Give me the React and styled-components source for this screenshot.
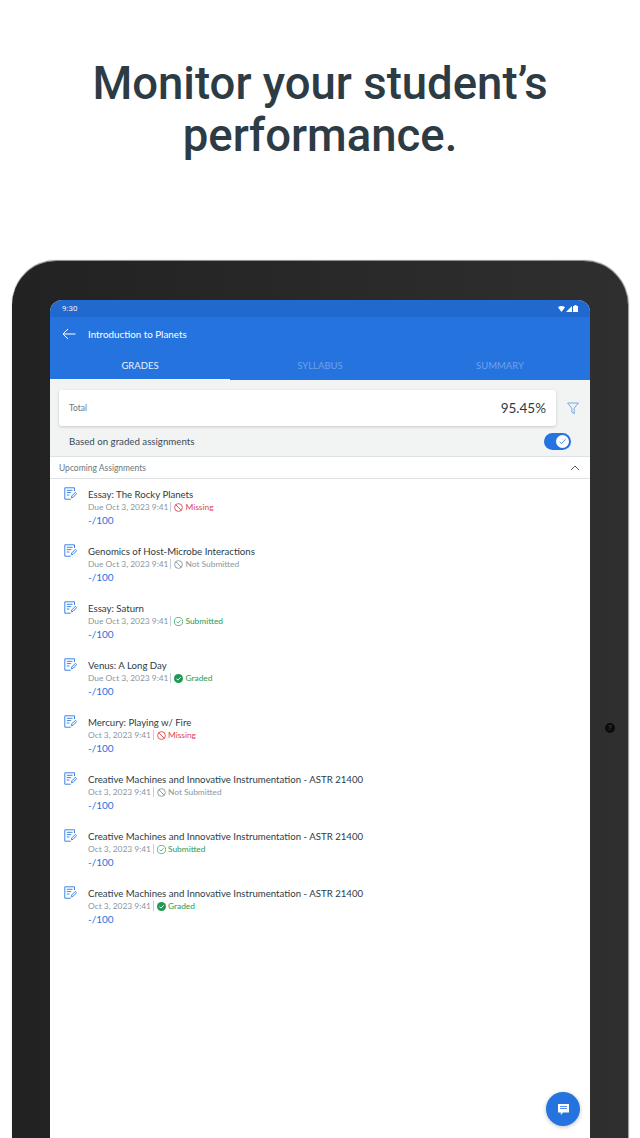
import React from "react";
import styled, { createGlobalStyle } from "styled-components";

const GlobalStyle = createGlobalStyle`
  html, body {
    margin: 0;
    padding: 0;
    background: #fff;
    height: 1138px;
    overflow: hidden;
  }
  * { box-sizing: border-box; }
`;

const Page = styled.div`
  width: 640px;
  height: 1138px;
  overflow: hidden;
  background: #fff;
`;

const Headline = styled.h1`
  margin: 0;
  padding-top: 58px;
  height: 261px;
  text-align: center;
  font-family: Roboto, sans-serif;
  font-weight: 500;
  font-size: 45.5px;
  line-height: 52px;
  color: #2d3b45;
`;

const Tablet = styled.div`
  position: relative;
  width: 616px;
  height: 900px;
  margin-left: 12px;
  padding: 39px 38px 0 38px;
  border-radius: 44px 44px 0 0;
  background: linear-gradient(90deg, #222 0%, #2f2f2f 100%);
  box-shadow: 1px 0 1px #999, 0 -1px 1px #888;
`;

const Camera = styled.div`
  position: absolute;
  left: 593px;
  top: 462px;
  width: 10px;
  height: 10px;
  border-radius: 50%;
  background: #0c0c0c;
  color: #3a3a3a;
  font: 700 7px/10px "Liberation Sans", sans-serif;
  text-align: center;
`;

const Screen = styled.div`
  position: relative;
  height: 861px;
  border-radius: 12px 12px 0 0;
  overflow: hidden;
  background: #fff;
  font-family: Lato, sans-serif;
`;

const StatusBar = styled.div`
  height: 17px;
  padding: 0 12px;
  display: flex;
  align-items: center;
  justify-content: space-between;
  background: #2269cf;
  color: #e6eefb;
  font: 400 8px Roboto, sans-serif;
`;

const StatusIcons = styled.div`
  display: flex;
  align-items: center;
  gap: 1px;
`;

const AppBar = styled.div`
  background: #2573df;
`;

const TitleRow = styled.div`
  height: 35px;
  padding: 0 0 1px 12px;
  display: flex;
  align-items: center;
  gap: 12px;
  color: #fff;
  font-size: 9.8px;
  font-weight: 400;
`;

const Tabs = styled.div`
  display: grid;
  grid-template-columns: repeat(3, 1fr);
  height: 28px;
`;

const Tab = styled.div`
  display: flex;
  align-items: center;
  justify-content: center;
  font-size: 9.5px;
  color: ${(p) => (p.$active ? "#eaf1fc" : "#6ea2ea")};
  border-bottom: 1px solid ${(p) => (p.$active ? "#f4f7fc" : "transparent")};
`;

const SummaryPanel = styled.div`
  height: 77px;
  padding: 10px 11px 0 9px;
  background: #f2f4f4;
  border-bottom: 1px solid #dfe2e4;
`;

const TotalRow = styled.div`
  display: flex;
  align-items: center;
  gap: 11px;
`;

const TotalCard = styled.div`
  flex: 1;
  height: 36px;
  padding: 0 10px;
  display: flex;
  align-items: center;
  justify-content: space-between;
  background: #fff;
  border-radius: 3px;
  box-shadow: 0 1px 3px rgba(0, 0, 0, 0.18);
`;

const TotalLabel = styled.span`
  font-size: 8.5px;
  color: #6b7780;
`;

const TotalValue = styled.span`
  font-size: 13.5px;
  color: #2d3b45;
`;

const BasedRow = styled.div`
  height: 30px;
  padding: 0 8px 0 10px;
  display: flex;
  align-items: center;
  justify-content: space-between;
  font-size: 9.7px;
  color: #3c4a54;
`;

const Toggle = styled.div`
  width: 27px;
  height: 17px;
  padding: 2px;
  border-radius: 9px;
  background: #2573df;
  display: flex;
  justify-content: flex-end;
`;

const Knob = styled.div`
  width: 13px;
  height: 13px;
  border-radius: 50%;
  background: #fff;
  display: flex;
  align-items: center;
  justify-content: center;
`;

const SectionHeader = styled.div`
  height: 22px;
  padding: 0 10px 0 9px;
  display: flex;
  align-items: center;
  justify-content: space-between;
  font-size: 8.5px;
  color: #6b7780;
  border-bottom: 1px solid #dfe2e4;
`;

const List = styled.div`
  padding-top: 7px;
`;

const Row = styled.div`
  height: 57px;
  padding: 0 0 0 14px;
  display: flex;
  gap: 11px;
`;

const RowIcon = styled.div`
  display: flex;
  width: 13px;
  height: 14px;
  flex: none;
  padding-top: 1px;
`;

const RowBody = styled.div`
  display: flex;
  flex-direction: column;
  padding-top: 1px;
`;

const RowTitle = styled.div`
  font-size: 9.65px;
  line-height: 14px;
  color: #2d3b45;
`;

const Meta = styled.div`
  display: flex;
  align-items: center;
  height: 12px;
  font-size: 8.4px;
  color: #8b969e;
`;

const Divider = styled.span`
  width: 1px;
  height: 10px;
  margin: 0 3px 0 2px;
  background: #c7cdd1;
`;

const Status = styled.span`
  display: flex;
  align-items: center;
  gap: 2px;
  color: ${(p) => p.$color};
`;

const Score = styled.div`
  font-size: 10px;
  line-height: 14px;
  color: #2573df;
`;

const Fab = styled.div`
  position: absolute;
  right: 10px;
  bottom: 35px;
  width: 34px;
  height: 34px;
  border-radius: 50%;
  background: #2573df;
  box-shadow: 0 1px 4px rgba(0, 0, 0, 0.25);
  display: flex;
  align-items: center;
  justify-content: center;
`;

const STATUS = {
  missing: { label: "Missing", color: "#e0454f" },
  none: { label: "Not Submitted", color: "#8b969e" },
  submitted: { label: "Submitted", color: "#1f9a55" },
  graded: { label: "Graded", color: "#1f9a55" },
};

const rows = [
  ["Essay: The Rocky Planets", "Due Oct 3, 2023 9:41", "missing"],
  ["Genomics of Host-Microbe Interactions", "Due Oct 3, 2023 9:41", "none"],
  ["Essay: Saturn", "Due Oct 3, 2023 9:41", "submitted"],
  ["Venus: A Long Day", "Due Oct 3, 2023 9:41", "graded"],
  ["Mercury: Playing w/ Fire", "Oct 3, 2023 9:41", "missing"],
  ["Creative Machines and Innovative Instrumentation - ASTR 21400", "Oct 3, 2023 9:41", "none"],
  ["Creative Machines and Innovative Instrumentation - ASTR 21400", "Oct 3, 2023 9:41", "submitted"],
  ["Creative Machines and Innovative Instrumentation - ASTR 21400", "Oct 3, 2023 9:41", "graded"],
];

const AssignmentIcon = () => (
  <svg width="13" height="13" viewBox="0 0 13 13" fill="none" stroke="#3f85e4" strokeWidth="1">
    <path d="M10.5 4V.8H.8v11.4h6" />
    <path d="M2.8 3.3h5.7M2.8 5.6h4.4M2.8 8h2.6" />
    <path d="M7.4 10.8l.4-1.9 3.6-3.6 1.3 1.3-3.6 3.7z" fill="#fff" />
  </svg>
);

const StatusIcon = ({ kind, color }) => {
  if (kind === "graded") {
    return (
      <svg width="9" height="9" viewBox="0 0 9 9">
        <circle cx="4.5" cy="4.5" r="4.5" fill={color} />
        <path d="M2.4 4.6l1.5 1.5 2.8-2.9" fill="none" stroke="#fff" strokeWidth="1" />
      </svg>
    );
  }
  if (kind === "submitted") {
    return (
      <svg width="9" height="9" viewBox="0 0 9 9" fill="none" stroke={color} strokeWidth="0.7">
        <circle cx="4.5" cy="4.5" r="4.1" />
        <path d="M2.5 4.6l1.5 1.5 2.6-2.8" />
      </svg>
    );
  }
  return (
    <svg width="9" height="9" viewBox="0 0 9 9" fill="none" stroke={color} strokeWidth="0.9">
      <circle cx="4.5" cy="4.5" r="3.9" />
      <path d="M1.8 1.8l5.4 5.4" />
    </svg>
  );
};

const Assignment = ({ title, due, kind }) => {
  const status = STATUS[kind];
  return (
    <Row>
      <RowIcon>
        <AssignmentIcon />
      </RowIcon>
      <RowBody>
        <RowTitle>{title}</RowTitle>
        <Meta>
          {due}
          <Divider />
          <Status $color={status.color}>
            <StatusIcon kind={kind} color={status.color} />
            {status.label}
          </Status>
        </Meta>
        <Score>-/100</Score>
      </RowBody>
    </Row>
  );
};

const App = () => (
  <Page>
    <GlobalStyle />
    <Headline>
      Monitor your student’s
      <br />
      performance.
    </Headline>
    <Tablet>
      <Camera>?</Camera>
      <Screen>
        <StatusBar>
          <span>9:30</span>
          <StatusIcons>
            <svg width="7" height="6" viewBox="0 0 7 6">
              <path d="M0 1.2C2 -.4 5 -.4 7 1.2L3.5 6z" fill="#fff" />
            </svg>
            <svg width="6" height="6" viewBox="0 0 6 6">
              <path d="M6 0v6H0z" fill="#fff" />
            </svg>
            <svg width="5" height="7" viewBox="0 0 5 7">
              <path d="M1.5 0h2v1H5v6H0V1h1.5z" fill="#fff" />
            </svg>
          </StatusIcons>
        </StatusBar>
        <AppBar>
          <TitleRow>
            <svg width="14" height="12" viewBox="0 0 14 12" fill="none" stroke="#fff" strokeWidth="1">
              <path d="M13.5 6H1M6 1L1 6l5 5" />
            </svg>
            Introduction to Planets
          </TitleRow>
          <Tabs>
            <Tab $active>GRADES</Tab>
            <Tab>SYLLABUS</Tab>
            <Tab>SUMMARY</Tab>
          </Tabs>
        </AppBar>
        <SummaryPanel>
          <TotalRow>
            <TotalCard>
              <TotalLabel>Total</TotalLabel>
              <TotalValue>95.45%</TotalValue>
            </TotalCard>
            <svg width="12" height="13" viewBox="0 0 12 13" fill="none" stroke="#5a93e6" strokeWidth="0.8">
              <path d="M.6 1h10.8L7.2 6.2v5.6L4.8 10V6.2z" />
            </svg>
          </TotalRow>
          <BasedRow>
            Based on graded assignments
            <Toggle>
              <Knob>
                <svg width="9" height="9" viewBox="0 0 9 9" fill="none" stroke="#2573df" strokeWidth="0.8">
                  <path d="M1.5 4.7l2 2 4-4.4" />
                </svg>
              </Knob>
            </Toggle>
          </BasedRow>
        </SummaryPanel>
        <SectionHeader>
          Upcoming Assignments
          <svg width="10" height="6" viewBox="0 0 10 6" fill="none" stroke="#3c4a54" strokeWidth="0.9">
            <path d="M1 5l4-4 4 4" />
          </svg>
        </SectionHeader>
        <List>
          {rows.map(([title, due, kind], i) => (
            <Assignment key={i} title={title} due={due} kind={kind} />
          ))}
        </List>
        <Fab>
          <svg width="13" height="13" viewBox="0 0 13 13">
            <path d="M1 1h11v8.5H6L3.8 12V9.5H1z" fill="#fff" />
            <path d="M3 3.5h7M3 5.5h7" stroke="#2573df" strokeWidth="0.8" />
          </svg>
        </Fab>
      </Screen>
    </Tablet>
  </Page>
);

export default App;
